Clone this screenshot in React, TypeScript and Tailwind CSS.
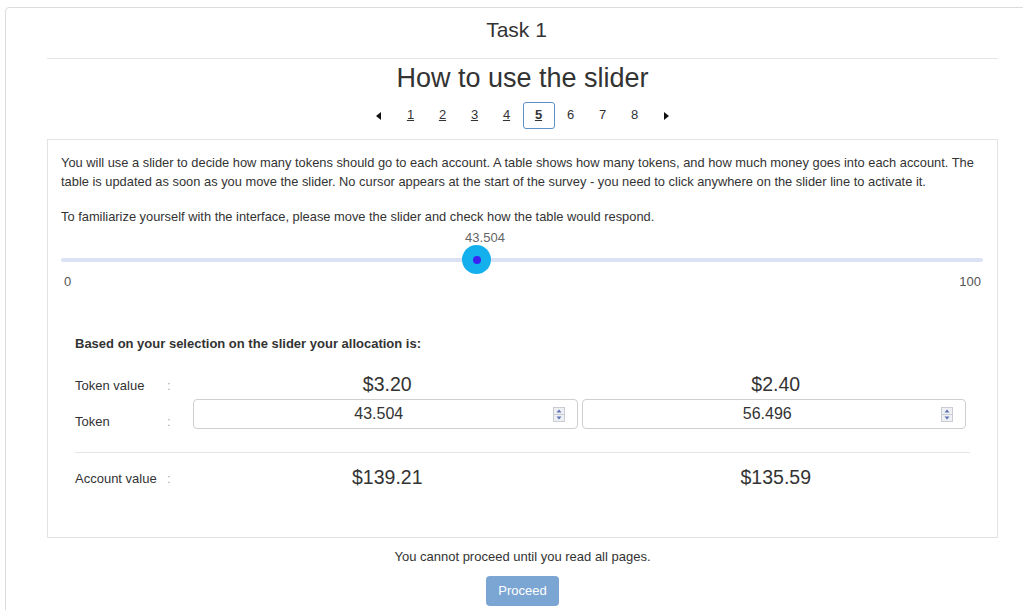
import React from "react";

const pages = [1, 2, 3, 4, 5, 6, 7, 8];
const current = 5;
const visited = 5;

function Caret({ dir }: { dir: "left" | "right" }) {
  return (
    <svg width="5" height="8" viewBox="0 0 5 8" aria-hidden>
      {dir === "left" ? (
        <polygon points="5,0 5,8 0,4" fill="#111" />
      ) : (
        <polygon points="0,0 0,8 5,4" fill="#111" />
      )}
    </svg>
  );
}

function Spinner() {
  return (
    <svg width="12" height="15" viewBox="0 0 12 15" aria-hidden>
      <rect x="0.5" y="0.5" width="11" height="14" fill="#eef0f4" stroke="#c9ccd3" />
      <line x1="0.5" y1="7.5" x2="11.5" y2="7.5" stroke="#c9ccd3" />
      <polygon points="6,2.5 8.5,5.5 3.5,5.5" fill="#5d72b5" />
      <polygon points="3.5,9.5 8.5,9.5 6,12.5" fill="#5d72b5" />
    </svg>
  );
}

function NumberBox({ value }: { value: string }) {
  return (
    <div className="relative flex h-[30px] items-center justify-center rounded-[4px] border border-[#cfcfcf] pr-[13px] text-[16px]">
      <span>{value}</span>
      <span className="absolute right-[12px] top-[7px] flex">
        <Spinner />
      </span>
    </div>
  );
}

export default function App() {
  const thumbLeft = 401;
  return (
    <div className="min-h-[610px] w-full overflow-hidden bg-white font-['Liberation_Sans',Arial,sans-serif] text-[#333]">
      <div className="ml-[5px] mt-[7px] w-[1035px] rounded-[4px] border border-[#dcdcdc] px-[41px] pb-[30px]">
        <h1 className="pb-[18px] pr-[12px] pt-[12px] text-center text-[21px] leading-[20px]">Task 1</h1>
        <div className="border-t border-[#e6e6e6]" />
        <h2 className="mt-[4px] text-center text-[27px] leading-[30px]">How to use the slider</h2>

        <nav className="mt-[9px] flex h-[27px] justify-center">
          <span className="flex w-[32px] items-center justify-center">
            <Caret dir="left" />
          </span>
          {pages.map((p) => (
            <span
              key={p}
              className={
                p === current
                  ? "flex w-[32px] items-center justify-center rounded-[3px] border border-[#5f8fc6] pb-[1px] text-[13px] font-bold underline"
                  : p < visited
                  ? "flex w-[32px] items-center justify-center pb-[1px] text-[13px] underline"
                  : "flex w-[32px] items-center justify-center pb-[1px] text-[13px]"
              }
            >
              {p}
            </span>
          ))}
          <span className="flex w-[32px] items-center justify-center">
            <Caret dir="right" />
          </span>
        </nav>

        <section className="mt-[10px] border border-[#e3e3e3] px-[13px] pb-[48px] pt-[13px]">
          <p className="text-[12.86px] leading-[19px]">
            You will use a slider to decide how many tokens should go to each account. A table shows how many
            tokens, and how much money goes into each account. The table is updated as soon as you move the
            slider. No cursor appears at the start of the survey - you need to click anywhere on the slider line to
            activate it.
          </p>
          <p className="mt-[16px] text-[12.86px] leading-[19px]">
            To familiarize yourself with the interface, please move the slider and check how the table would
            respond.
          </p>

          <div className="relative mt-[5px] h-[43px]">
            <span className="absolute left-[424px] top-0 -translate-x-1/2 text-[13px] leading-[14px] text-[#666]">
              43.504
            </span>
            <div className="absolute left-0 right-[1px] top-[27px] h-[4px] rounded-full bg-[#dbe2f3]" />
            <div
              className="absolute top-[14px] flex h-[29px] w-[29px] items-center justify-center rounded-full bg-[#14b0ee]"
              style={{ left: thumbLeft }}
            >
              <div className="h-[8px] w-[8px] rounded-full bg-[#3a22f2]" />
            </div>
          </div>
          <div className="flex justify-between px-[3px] text-[13px] leading-[15px] text-[#555]">
            <span>0</span>
            <span>100</span>
          </div>

          <div className="mt-[47px] px-[14px]">
            <div className="text-[13px] font-bold leading-[15px]">
              Based on your selection on the slider your allocation is:
            </div>

            <div className="mt-[19px] grid h-[26px] grid-cols-[114px_1fr_1fr] items-center gap-x-[4px] pr-[4px]">
              <div className="flex pt-[1px] text-[13px]">
                <span className="w-[92px]">Token value</span>
                <span className="text-[#aaa]">:</span>
              </div>
              <div className="pb-[2px] pl-[4px] text-center text-[19.5px]">$3.20</div>
              <div className="pb-[2px] pl-[4px] text-center text-[19.5px]">$2.40</div>
            </div>

            <div className="mt-[3px] grid grid-cols-[114px_1fr_1fr] gap-x-[4px] pr-[4px]">
              <div className="flex items-end text-[13px] leading-[15px]">
                <span className="w-[92px]">Token</span>
                <span className="text-[#aaa]">:</span>
              </div>
              <NumberBox value="43.504" />
              <NumberBox value="56.496" />
            </div>

            <div className="mt-[23px] border-t border-[#e5e5e5]" />

            <div className="mt-[10px] grid h-[26px] grid-cols-[114px_1fr_1fr] items-center gap-x-[4px] pr-[4px]">
              <div className="flex text-[13px]">
                <span className="w-[92px]">Account value</span>
                <span className="text-[#aaa]">:</span>
              </div>
              <div className="pb-[2px] pl-[4px] text-center text-[19.5px]">$139.21</div>
              <div className="pb-[2px] pl-[4px] text-center text-[19.5px]">$135.59</div>
            </div>
          </div>
        </section>

        <p className="mt-[9px] text-center text-[13px] leading-[19px]">You cannot proceed until you read all pages.</p>
        <div className="mt-[10px] flex justify-center">
          <button
            type="button"
            disabled
            className="h-[30px] rounded-[4px] bg-[#7ba6d3] px-[12px] text-[13px] text-white"
          >
            Proceed
          </button>
        </div>
      </div>
    </div>
  );
}
